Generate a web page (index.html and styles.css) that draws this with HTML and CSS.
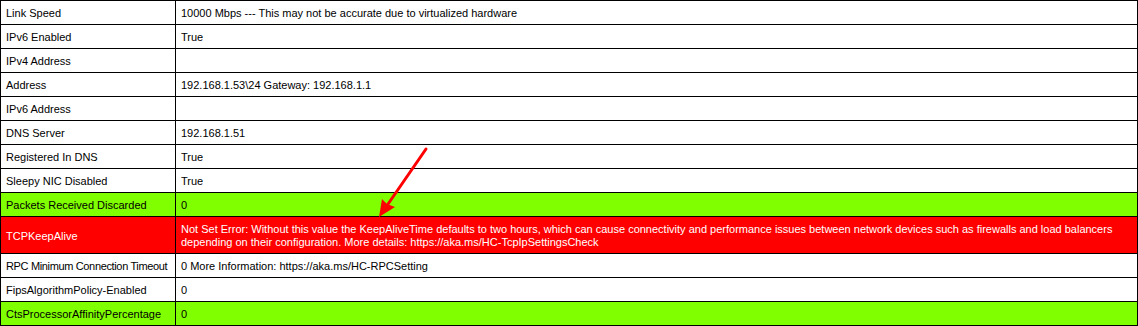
FILE: index.html
```html
<!DOCTYPE html>
<html>
<head>
<meta charset="utf-8">
<link rel="stylesheet" href="styles.css">
</head>
<body>
<div class="wrap">
<table class="info">
<colgroup><col class="c-key"><col class="c-val"></colgroup>
<tbody>
<tr><td>Link Speed</td><td>10000 Mbps --- This may not be accurate due to virtualized hardware</td></tr>
<tr><td>IPv6 Enabled</td><td>True</td></tr>
<tr><td>IPv4 Address</td><td></td></tr>
<tr><td>Address</td><td>192.168.1.53\24 Gateway: 192.168.1.1</td></tr>
<tr><td>IPv6 Address</td><td></td></tr>
<tr><td>DNS Server</td><td>192.168.1.51</td></tr>
<tr><td>Registered In DNS</td><td>True</td></tr>
<tr><td>Sleepy NIC Disabled</td><td>True</td></tr>
<tr class="ok"><td>Packets Received Discarded</td><td>0</td></tr>
<tr class="err"><td>TCPKeepAlive</td><td>Not Set Error: Without this value the KeepAliveTime defaults to two hours, which can cause connectivity and performance issues between network devices such as firewalls and load balancers depending on their configuration. More details: https://aka.ms/HC-TcpIpSettingsCheck</td></tr>
<tr><td class="tight">RPC Minimum Connection Timeout</td><td>0 More Information: https://aka.ms/HC-RPCSetting</td></tr>
<tr><td>FipsAlgorithmPolicy-Enabled</td><td>0</td></tr>
<tr class="ok"><td>CtsProcessorAffinityPercentage</td><td>0</td></tr>
</tbody>
</table>
<svg class="arrow" width="1138" height="326" viewBox="0 0 1138 326">
<line x1="426" y1="149" x2="386" y2="207" stroke="#ff0000" stroke-width="3" stroke-linecap="round"/>
<polygon points="379,217 382,199 387,204 395,207" fill="#ff0000"/>
</svg>
</div>
</body>
</html>
```

FILE: styles.css
```css
html, body {
  margin: 0;
  padding: 0;
  background: #ffffff;
}
.wrap {
  position: relative;
  width: 1138px;
}
.info {
  width: 1138px;
  table-layout: fixed;
  border-collapse: collapse;
  font-family: "Liberation Sans", Arial, sans-serif;
  font-size: 11px;
  line-height: 13px;
  color: #000000;
}
.c-key { width: 175px; }
.info td {
  border: 1px solid #000000;
  padding: 6px 5px 4px;
  vertical-align: middle;
  text-align: left;
}
.info td:first-child {
  white-space: nowrap;
  padding-right: 0;
}
.info td.tight {
  letter-spacing: -0.35px;
}
.info tr.ok td {
  background: #80ff00;
}
.info tr.err td {
  background: #ff0000;
  color: #ffffff;
}
.arrow {
  position: absolute;
  left: 0;
  top: 0;
  pointer-events: none;
}
```
